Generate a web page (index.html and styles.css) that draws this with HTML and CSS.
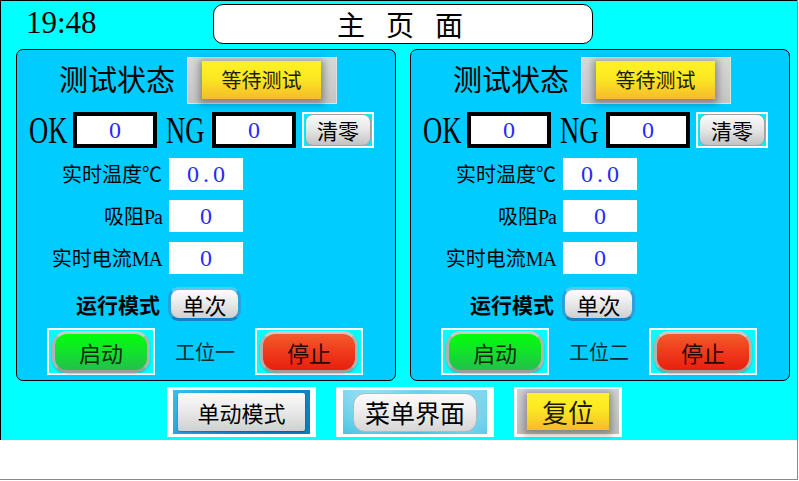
FILE: index.html
```html
<!DOCTYPE html>
<html lang="zh-CN">
<head>
<meta charset="utf-8">
<title>主页面</title>
<link rel="stylesheet" href="styles.css">
</head>
<body>
<div class="frame">
  <div class="screen">
    <header class="header">
      <div class="clock">19:48</div>
      <div class="title">主页面</div>
    </header>
    <main class="panels">
      <section class="panel">
        <div class="status-row">
          <span class="status-label">测试状态</span>
          <div class="status-frame"><div class="status-btn">等待测试</div></div>
        </div>
        <div class="count-row">
          <span class="big-lat ok-lab"><span class="squeeze">OK</span></span>
          <div class="count-box">0</div>
          <span class="big-lat ng-lab"><span class="squeeze">NG</span></span>
          <div class="count-box">0</div>
          <div class="clear-frame"><div class="clear-btn">清零</div></div>
        </div>
        <div class="data-row first"><span class="data-label">实时温度℃</span><div class="data-box dec">0.0</div></div>
        <div class="data-row"><span class="data-label">吸阻<span class="lat">Pa</span></span><div class="data-box">0</div></div>
        <div class="data-row"><span class="data-label">实时电流<span class="lat">MA</span></span><div class="data-box">0</div></div>
        <div class="mode-row">
          <span class="mode-label">运行模式</span>
          <div class="mode-btn">单次</div>
        </div>
        <div class="action-row">
          <div class="pill-frame"><div class="pill start">启动</div></div>
          <span class="station">工位一</span>
          <div class="pill-frame"><div class="pill stop">停止</div></div>
        </div>
      </section>
      <section class="panel">
        <div class="status-row">
          <span class="status-label">测试状态</span>
          <div class="status-frame"><div class="status-btn">等待测试</div></div>
        </div>
        <div class="count-row">
          <span class="big-lat ok-lab"><span class="squeeze">OK</span></span>
          <div class="count-box">0</div>
          <span class="big-lat ng-lab"><span class="squeeze">NG</span></span>
          <div class="count-box">0</div>
          <div class="clear-frame"><div class="clear-btn">清零</div></div>
        </div>
        <div class="data-row first"><span class="data-label">实时温度℃</span><div class="data-box dec">0.0</div></div>
        <div class="data-row"><span class="data-label">吸阻<span class="lat">Pa</span></span><div class="data-box">0</div></div>
        <div class="data-row"><span class="data-label">实时电流<span class="lat">MA</span></span><div class="data-box">0</div></div>
        <div class="mode-row">
          <span class="mode-label">运行模式</span>
          <div class="mode-btn">单次</div>
        </div>
        <div class="action-row">
          <div class="pill-frame"><div class="pill start">启动</div></div>
          <span class="station">工位二</span>
          <div class="pill-frame"><div class="pill stop">停止</div></div>
        </div>
      </section>
    </main>
    <nav class="bottom">
      <div class="nav-frame manual"><div class="manual-area"><div class="manual-btn">单动模式</div></div></div>
      <div class="nav-frame menu"><div class="menu-area"><div class="menu-btn">菜单界面</div></div></div>
      <div class="nav-frame reset"><div class="reset-area"><div class="reset-btn">复位</div></div></div>
    </nav>
  </div>
</div>
</body>
</html>
```

FILE: styles.css
```css
* { box-sizing: border-box; margin: 0; padding: 0; }
html, body { width: 799px; height: 481px; background: #fff; overflow: hidden; }
body { font-family: "Noto Sans CJK SC", sans-serif; color: #000; }

.frame {
  width: 798px;
  height: 480px;
  border-right: 1px solid #8a8a8a;
  border-bottom: 1px solid #8a8a8a;
}
.screen {
  height: 440px;
  background: #00ffff;
  border-top: 1px solid #000;
  border-left: 1px solid #000;
  display: flex;
  flex-direction: column;
}

/* header */
.header { height: 48px; display: flex; align-items: flex-start; }
.clock {
  width: 187px;
  margin: 6px 0 0 25px;
  font: 31px/31px "Liberation Serif", serif;
}
.title {
  width: 380px;
  height: 40px;
  margin-top: 3px;
  background: #fff;
  border: 1px solid #000;
  border-radius: 10px;
  display: flex;
  align-items: center;
  justify-content: center;
  font-size: 28px;
  line-height: 1;
  letter-spacing: 21px;
  padding-left: 15px;
}

/* panels */
.panels { display: flex; gap: 14px; padding-left: 15px; }
.panel {
  width: 380px;
  height: 332px;
  background: #00ccff;
  border: 1px solid #000;
  border-radius: 7px;
  padding-top: 7px;
  display: flex;
  flex-direction: column;
}

.status-row { display: flex; align-items: center; height: 47px; padding-left: 42px; }
.status-label { width: 128px; font-size: 29px; line-height: 1; padding-bottom: 4px; }
.status-frame {
  width: 150px;
  height: 47px;
  display: flex;
  align-items: center;
  justify-content: center;
  background: linear-gradient(#d8d8d8, #c4c4c4);
  border: 1px solid #e2e2e2;
  padding: 0 1px 1px 0;
}
.status-btn {
  width: 119px;
  height: 38px;
  display: flex;
  align-items: center;
  justify-content: center;
  background: linear-gradient(#fff224 0%, #fce823 45%, #f6bb2a 100%);
  box-shadow: 0 2px 7px 3px rgba(0, 0, 0, 0.32);
  font-size: 20px;
  line-height: 1;
  color: #1c1c00;
}

.count-row { display: flex; align-items: center; height: 36px; margin-top: 8px; padding-left: 12px; }
.big-lat { display: block; height: 36px; overflow: visible; white-space: nowrap; }
.ok-lab { width: 44px; }
.ng-lab { width: 46px; margin-left: 9px; }
.squeeze {
  display: inline-block;
  font: 38px/36px "Liberation Serif", serif;
  transform: scaleX(0.7);
  transform-origin: left center;
}
.count-box {
  width: 84px;
  height: 36px;
  background: #fff;
  border: 4px solid #000;
  display: flex;
  align-items: center;
  justify-content: center;
  font: 24px/1 "Liberation Serif", serif;
  color: #2a2aff;
}
.clear-frame {
  width: 72px;
  height: 36px;
  margin-left: 6px;
  background: #00eeff;
  border: 2px solid #fff;
  padding: 0 1px;
  display: flex;
  align-items: center;
}
.clear-btn {
  width: 100%;
  height: 32px;
  border: 1px solid #a0a0a0;
  border-radius: 8px;
  background: linear-gradient(#fbfbfb, #e6e6e6 50%, #c2c2c2);
  display: flex;
  align-items: center;
  justify-content: center;
  font-size: 21px;
  line-height: 1;
}

.data-row { display: flex; align-items: center; height: 32px; margin-top: 10px; }
.data-label { width: 145px; text-align: right; font-size: 20px; line-height: 1; white-space: nowrap; }
.lat { font-family: "Liberation Serif", serif; font-size: 20px; letter-spacing: -1px; }
.data-box {
  width: 74px;
  height: 32px;
  margin-left: 7px;
  background: #fff;
  display: flex;
  align-items: center;
  justify-content: center;
  font: 24px/1 "Liberation Serif", serif;
  color: #2a2aff;
}
.data-box.dec { letter-spacing: 4px; padding-left: 4px; }

.mode-row { display: flex; align-items: center; height: 34px; margin-top: 13px; }
.mode-label { width: 143px; text-align: right; font-size: 21px; font-weight: 700; line-height: 1; }
.mode-btn {
  width: 73px;
  height: 34px;
  margin-left: 8px;
  border: 3px solid;
  border-color: #56c8f0 #2aa2da #1482c2;
  border-radius: 11px;
  background: linear-gradient(#fdfdfd, #e8e8e8 50%, #cfcfcf);
  display: flex;
  align-items: center;
  justify-content: center;
  font-size: 22px;
  line-height: 1;
}

.action-row { display: flex; align-items: center; height: 47px; margin-top: 7px; padding-left: 30px; }
.pill-frame {
  width: 108px;
  height: 47px;
  background: #00ffff;
  border: 2px solid #fff;
  padding: 1px 3px 0;
  display: flex;
  align-items: center;
  justify-content: center;
}
.pill {
  width: 98px;
  height: 42px;
  border: 3px solid;
  border-color: #cacaca #b2b2b2 #9c9c9c;
  border-radius: 15px;
  display: flex;
  align-items: center;
  justify-content: center;
  font-size: 22px;
  line-height: 1;
  box-shadow: 0 1px 2px rgba(0, 0, 0, 0.25);
}
.pill.start { background: linear-gradient(#00ff08, #12e22c 50%, #22c04c); color: #0b2a0b; }
.pill.stop { background: linear-gradient(#f25c2a, #ef3a1c 50%, #e8200e); color: #2a0800; }
.station { width: 80px; margin-left: 20px; font-size: 20px; line-height: 1; color: #062a30; }

/* bottom navigation */
.bottom { display: flex; gap: 20px; margin-top: 6px; padding-left: 166px; }
.nav-frame { height: 50px; background: #fff; display: flex; }
.manual { width: 149px; padding: 3px 6px; }
.menu { width: 158px; padding: 3px 7px; }
.reset { width: 108px; padding: 2px 3px 3px; }

.manual-area {
  flex: 1;
  padding: 3px 5px;
  background: linear-gradient(135deg, #36bff0, #0a8bd0 60%, #0a7cc0);
  display: flex;
}
.manual-btn {
  flex: 1;
  border-radius: 2px;
  background: linear-gradient(#fafafa, #e8e8e8 50%, #d0d0d0);
  box-shadow: 0 1px 2px rgba(0, 0, 0, 0.3);
  display: flex;
  align-items: center;
  justify-content: center;
  font-size: 22px;
  line-height: 1;
}

.menu-area {
  flex: 1;
  padding: 3px 10px 2px;
  background:
    radial-gradient(circle at 20% 30%, rgba(255, 255, 255, 0.35), transparent 40%),
    radial-gradient(circle at 85% 70%, rgba(255, 255, 255, 0.3), transparent 40%),
    linear-gradient(#6fd3ee, #3fc2e4);
  display: flex;
}
.menu-btn {
  flex: 1;
  border: 1px solid #b8b8b8;
  border-radius: 12px;
  background: linear-gradient(#fbfbfb, #ececec 50%, #d6d6d6);
  display: flex;
  align-items: center;
  justify-content: center;
  font-size: 25px;
  line-height: 1;
}

.reset-area {
  flex: 1;
  padding: 4px 10px 4px;
  background: linear-gradient(#d2d2d2, #c0c0c0);
  display: flex;
}
.reset-btn {
  flex: 1;
  background: linear-gradient(#fff224, #fce823 45%, #f6bb2a);
  box-shadow: 0 2px 7px 3px rgba(0, 0, 0, 0.3);
  display: flex;
  align-items: center;
  justify-content: center;
  font-size: 26px;
  line-height: 1;
  color: #1c1c00;
}
```
